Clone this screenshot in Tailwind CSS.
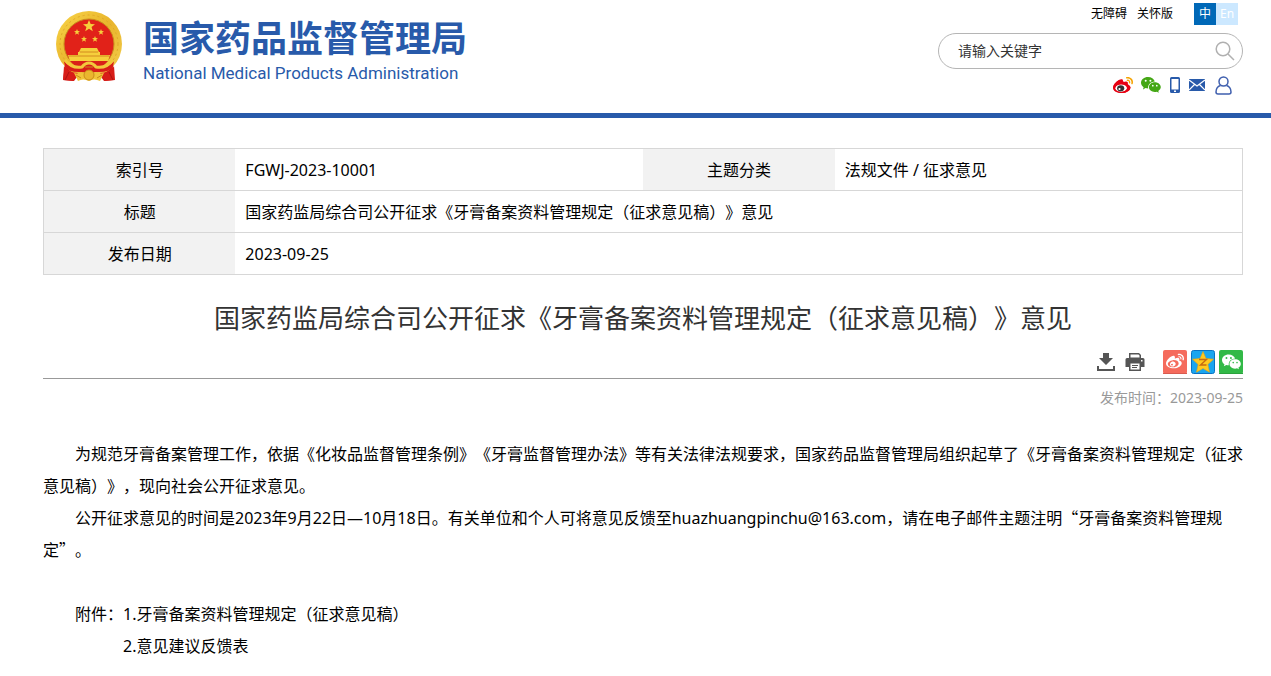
<!DOCTYPE html>
<html lang="zh-CN">
<head>
    <meta charset="UTF-8">
    <meta name="viewport" content="width=device-width, initial-scale=1.0">
    <title>国家药监局综合司公开征求《牙膏备案资料管理规定（征求意见稿）》意见</title>
    <script src="https://cdn.jsdelivr.net/npm/@tailwindcss/browser@4"></script>
</head>
<body class="bg-white text-black font-['Noto_Sans','Noto_Sans_CJK_SC',sans-serif] [text-spacing-trim:space-all] overflow-x-hidden">

    <!-- Shared icon shapes -->
    <svg class="hidden" xmlns="http://www.w3.org/2000/svg">
        <symbol id="weiboBody" viewBox="0 0 24 24">
            <path d="M10.098 20.323c-3.977.391-7.414-1.406-7.672-4.02-.259-2.609 2.759-5.047 6.74-5.441 3.979-.394 7.413 1.404 7.671 4.018.259 2.6-2.759 5.049-6.737 5.439l-.002.004zm7.961-8.674c-.346-.105-.57-.18-.405-.615.375-.977.42-1.804 0-2.404-.781-1.112-2.915-1.053-5.364-.03 0 0-.766.331-.571-.271.376-1.217.315-2.224-.27-2.809-1.338-1.337-4.869.045-7.888 3.08C1.309 10.87 0 13.273 0 15.348c0 3.981 5.099 6.395 10.086 6.395 6.536 0 10.888-3.801 10.888-6.82 0-1.822-1.547-2.854-2.915-3.284v.01z"/>
        </symbol>
        <symbol id="weiboEye" viewBox="0 0 24 24">
            <path fill-rule="evenodd" d="M9.05 17.219c-.384.616-1.208.884-1.829.602-.612-.279-.793-.991-.406-1.593.379-.595 1.176-.861 1.793-.601.622.263.82.972.442 1.592zm1.446-4.346c-1.893-.493-4.033.45-4.857 2.118-.836 1.704-.026 3.591 1.886 4.21 1.983.64 4.318-.341 5.132-2.179.8-1.793-.201-3.642-2.161-4.149z"/>
        </symbol>
        <symbol id="weiboWaves" viewBox="0 0 24 24">
            <path d="M19.967 6.557c-.766-.856-1.908-1.187-2.96-.962-.436.09-.706.511-.616.932.09.42.511.691.932.602.511-.105 1.067.044 1.442.465.376.421.466.977.316 1.473-.136.406.089.856.51.992.405.119.857-.105.992-.512.33-1.021.12-2.178-.646-3.035zm2.418-2.195c-1.576-1.757-3.905-2.419-6.054-1.968-.496.104-.812.587-.706 1.081.104.496.586.813 1.082.707 1.532-.331 3.185.15 4.296 1.383 1.112 1.246 1.429 2.943.947 4.416-.165.48.106 1.007.586 1.157.479.165.991-.104 1.157-.586.675-2.088.241-4.478-1.338-6.235z"/>
        </symbol>
        <symbol id="wechat" viewBox="0 0 20 16">
            <path fill-rule="evenodd" d="M7 0C3.100 0 0 2.600 0 5.800c0 1.800 1 3.400 2.600 4.500L2 12.400l2.500-1.300c.8.3 1.700.4 2.700.4C6.500 7.700 9.600 4.600 13.800 4.400 13.100 1.900 10.300 0 7 0zM4.700 2.800a1 1 0 1 1 0 2 1 1 0 0 1 0-2zm4.700 0a1 1 0 1 1 0 2 1 1 0 0 1 0-2z"/>
            <path fill-rule="evenodd" d="M13.800 5.200c-3.300 0-5.900 2.200-5.900 4.900s2.600 4.900 5.900 4.900c.7 0 1.400-.1 2-.3l2 1-.5-1.800c1.500-.9 2.500-2.300 2.500-3.800 0-2.700-2.700-4.900-6-4.900zm-2 2.600a.8.8 0 1 1 0 1.700.8.8 0 0 1 0-1.700zm4 0a.8.8 0 1 1 0 1.700.8.8 0 0 1 0-1.700z"/>
        </symbol>
        <symbol id="star" viewBox="0 0 24 24">
            <path d="M12 0l3.300 8.200 8.700.3-6.900 5.500 2.500 8.700L12 17.600l-7.600 5.100 2.500-8.700L0 8.500l8.700-.3z"/>
        </symbol>
    </svg>

    <!-- Header -->
    <header class="flex justify-between border-b-5 border-[#285aaa] pl-14 pr-7 pb-[18px]">
        <a href="#" class="flex pt-[11px]">
            <svg class="w-[66px] h-[72px] mr-[21px]" viewBox="0 0 66 72" aria-hidden="true">
                <defs>
                    <linearGradient id="gold" x1="0" y1="0" x2="1" y2="1">
                        <stop offset="0" stop-color="#f8d548"/>
                        <stop offset="0.5" stop-color="#e9b52d"/>
                        <stop offset="1" stop-color="#f3cf4d"/>
                    </linearGradient>
                </defs>
                <path d="M10 46L7 69l11 1 5-7h20l5 7 10-1-2-23z" fill="#cf1a17"/>
                <circle cx="33" cy="33" r="33" fill="url(#gold)"/>
                <circle cx="33" cy="33" r="29" fill="none" stroke="#e0a829" stroke-width="1" stroke-dasharray="2 3"/>
                <circle cx="33" cy="33" r="25" fill="#e12219" stroke="#c98a1c" stroke-width="1"/>
                <g fill="#f6cf3c">
                    <use href="#star" x="27" y="9" width="12" height="12"/>
                    <use href="#star" x="18" y="18" width="6" height="6"/>
                    <use href="#star" x="42" y="18" width="6" height="6"/>
                    <use href="#star" x="25" y="25" width="6" height="6"/>
                    <use href="#star" x="36" y="25" width="6" height="6"/>
                    <path d="M25 37h16l2 4H23zM22 41h22v3H22zM12 44h42l-2 6H14z"/>
                </g>
                <path d="M24 41h18M13 45h40" stroke="#d38a1e" stroke-width="1"/>
                <path d="M14 50h38l-6 6-13-3-13 3z" fill="#d92018"/>
                <path d="M8 50q8 9 17 6 4-4 8-4t8 4q9 3 17-6l-1 6q-3 5-14 5H23q-11 0-14-5z" fill="#d81d18"/>
                <path d="M9 49q7 9 17 7 3-4 7-4t7 4q10 2 17-7" fill="none" stroke="#f3c83c" stroke-width="3"/>
                <path d="M8 55q3 7 14 7l-5 8-10-1zM58 55q-3 7-14 7l5 8 10-1z" fill="#d81d18"/>
                <path d="M13 61l-4 8M53 61l4 8" stroke="#aa1312" stroke-width="1"/>
                <path d="M18 62q9 2 15-3 6 5 15 3l-4 8q-6-3-11 0-6-3-11 0z" fill="#f1c438"/>
                <circle cx="33" cy="64" r="5" fill="#eab62e" stroke="#c98a1c"/>
                <path d="M20 64l5 3M46 64l-5 3M29 56h8" stroke="#c98a1c" stroke-width="1"/>
            </svg>
            <div class="text-[#285aaa] whitespace-nowrap pt-2">
                <p class="text-4xl leading-10 font-bold">国家药品监督管理局</p>
                <p class="text-[17px] leading-7 font-['Roboto',sans-serif]">National Medical Products Administration</p>
            </div>
        </a>

        <div class="w-[305px] flex flex-col">
            <nav class="flex justify-end items-center gap-[10px] pt-[3px] pr-[5px] text-xs">
                <a href="#">无障碍</a>
                <a href="#">关怀版</a>
                <span class="flex ml-[11px] text-white text-center leading-[22px]">
                    <a href="#" class="w-[22px] bg-[#0068b7]">中</a>
                    <a href="#" class="w-[22px] bg-[#cce8ff]">En</a>
                </span>
            </nav>
            <form class="mt-2 h-9 flex items-center rounded-full border border-[#b5b5b5] pl-[19px] pr-[7px]">
                <input type="text" aria-label="请输入关键字" placeholder="请输入关键字" class="flex-1 min-w-0 text-sm outline-none placeholder:text-[#333]">
                <button type="button" aria-label="搜索">
                    <svg class="block size-5" viewBox="0 0 20 20" fill="none" stroke="#b0b0b0" stroke-width="1.500"><circle cx="8" cy="8" r="6.800"/><path d="M13 13l6 6"/></svg>
                </button>
            </form>
            <div class="flex justify-end items-center mt-[6px] pr-[11px] h-5">
                <a href="#" aria-label="微博" class="mr-2">
                    <svg class="block size-5" viewBox="0 0 24 24">
                        <path d="M0 15Q1 9 8 6l3 1 7 4 3 4q-1 6-10 6.500Q1 21 0 15z" fill="#e60012"/>
                        <ellipse cx="9.800" cy="15.800" rx="7" ry="4.500" fill="#fff"/>
                        <use href="#weiboBody" fill="#e60012"/>
                        <ellipse cx="9.200" cy="16" rx="4.300" ry="3.700" fill="#333"/>
                        <circle cx="7.800" cy="16.800" r="1.300" fill="#fff"/>
                        <use href="#weiboWaves" fill="#f5a200"/>
                    </svg>
                </a>
                <a href="#" aria-label="微信" class="mr-[9px]"><svg class="block w-5 h-4 fill-[#45a716]"><use href="#wechat"/></svg></a>
                <a href="#" aria-label="手机" class="mr-[9px]">
                    <svg class="block w-[10px] h-4" viewBox="0 0 10 16"><path fill="#285aaa" fill-rule="evenodd" d="M1.500 0h7A1.500 1.500 0 0 1 10 1.500v13A1.500 1.500 0 0 1 8.500 16h-7A1.500 1.500 0 0 1 0 14.500v-13A1.500 1.500 0 0 1 1.500 0zM1.500 2v10.500h7V2zM4 13.500V15h2v-1.500z"/></svg>
                </a>
                <a href="#" aria-label="邮箱" class="mr-[10px]">
                    <svg class="block w-4 h-3" viewBox="0 0 16 12"><path fill="#285aaa" d="M0 0h16v12H0z"/><path d="M0 1l8 6 8-6M0 11l5.500-5.500M16 11l-5.500-5.500" fill="none" stroke="#fff" stroke-width="1.200"/></svg>
                </a>
                <a href="#" aria-label="个人中心">
                    <svg class="block w-[17px] h-[19px]" viewBox="0 0 17 19" fill="none" stroke="#3f5fae" stroke-width="1.500"><circle cx="8.500" cy="5.500" r="4.500"/><path d="M5.500 9.500C2.500 10.500 1 13 1 16c0 1.300.7 2 2 2h11c1.300 0 2-.7 2-2 0-3-1.500-5.500-4.500-6.500"/></svg>
                </a>
            </div>
        </div>
    </header>

    <main class="pl-[43px] pr-7 pt-[30px]">
        <!-- Document info -->
        <table class="w-full table-fixed border-collapse border border-[#d7d7d7] text-base leading-6">
            <colgroup>
                <col class="w-[16%]">
                <col class="w-[34%]">
                <col class="w-[16%]">
                <col class="w-[34%]">
            </colgroup>
            <tbody>
                <tr class="h-[42px] border-b border-[#d7d7d7]">
                    <th class="bg-[#f2f2f2] font-normal">索引号</th>
                    <td class="px-[10px]">FGWJ-2023-10001</td>
                    <th class="bg-[#f2f2f2] font-normal">主题分类</th>
                    <td class="px-[10px]">法规文件 / 征求意见</td>
                </tr>
                <tr class="h-[42px] border-b border-[#d7d7d7]">
                    <th class="bg-[#f2f2f2] font-normal">标题</th>
                    <td colspan="3" class="px-[10px]">国家药监局综合司公开征求《牙膏备案资料管理规定（征求意见稿）》意见</td>
                </tr>
                <tr class="h-[42px]">
                    <th class="bg-[#f2f2f2] font-normal">发布日期</th>
                    <td colspan="3" class="px-[10px]">2023-09-25</td>
                </tr>
            </tbody>
        </table>

        <!-- Article -->
        <article>
            <h1 class="mt-[23px] text-[26px] leading-10 text-center text-[#333]">国家药监局综合司公开征求《牙膏备案资料管理规定（征求意见稿）》意见</h1>

            <div class="flex justify-end items-center gap-1 mt-3 pb-1 border-b border-[#999]">
                <button type="button" aria-label="下载" class="mr-[5px]">
                    <svg class="block size-5" viewBox="0 0 20 20" fill="#555"><path d="M7 1h6v5h4l-7 7-7-7h4zM1 14h2v3h14v-3h2v5H1z"/></svg>
                </button>
                <button type="button" aria-label="打印" class="mr-[14px]">
                    <svg class="block size-5" viewBox="0 0 20 20"><path fill="#555" fill-rule="evenodd" d="M4 1h10l2 2v3H4zM5.500 2.500v3h9v-2L13.500 2.500zM2 6h16a1.500 1.500 0 0 1 1.500 1.500V15H16v4H4v-4H.5V7.500A1.500 1.500 0 0 1 2 6zm3.500 5.500v6h9v-6zM16 8v1.500h1.500V8zM7 13h6v1H7zm0 2h5v1H7z"/></svg>
                </button>
                <a href="#" aria-label="分享到新浪微博">
                    <svg class="block size-6" viewBox="0 0 24 24">
                        <rect width="24" height="24" rx="2" fill="#f56b5c"/>
                        <rect y="23" width="24" height="1" fill="#d95b50"/>
                        <g fill="#fff">
                            <use href="#weiboBody" x="3" y="2" width="18" height="18"/>
                            <use href="#weiboEye" x="3" y="2" width="18" height="18"/>
                            <use href="#weiboWaves" x="3" y="2" width="18" height="18"/>
                        </g>
                    </svg>
                </a>
                <a href="#" aria-label="分享到QQ空间">
                    <svg class="block size-6" viewBox="0 0 24 24">
                        <rect x="0.500" y="0.500" width="23" height="23" rx="2" fill="#1aa5ef" stroke="#0872c4"/>
                        <path d="M12 1.500l3 7 7.500.7-5.600 5.200 1.600 7.800-6.500-3.800-6.500 3.800 1.600-7.800L1.500 9.200l7.500-.7z" fill="#ffc91f" stroke="#e5a313" stroke-width="0.600"/>
                        <path d="M8 9.500h7.500l-6 5.500H15.500" fill="none" stroke="#c76a10" stroke-width="1.400"/>
                    </svg>
                </a>
                <a href="#" aria-label="分享到微信">
                    <svg class="block size-6" viewBox="0 0 24 24">
                        <rect width="24" height="24" rx="2" fill="#32b947"/>
                        <rect y="23" width="24" height="1" fill="#2ba23d"/>
                        <use href="#wechat" x="3" y="4" width="19" height="16" fill="#fff"/>
                    </svg>
                </a>
            </div>
            <p class="mt-[7px] text-right text-sm leading-6 text-[#999]">发布时间：2023-09-25</p>

            <div class="mt-7 text-base leading-8">
                <p class="indent-8">为规范牙膏备案管理工作，依据《化妆品监督管理条例》《牙膏监督管理办法》等有关法律法规要求，国家药品监督管理局组织起草了《牙膏备案资料管理规定（征求意见稿）》，现向社会公开征求意见。</p>
                <p class="indent-8">公开征求意见的时间是2023年9月22日—10月18日。有关单位和个人可将意见反馈至huazhuangpinchu@163.com，请在电子邮件主题注明<span class="leading-none font-['Noto_Sans_CJK_SC',sans-serif]">“</span>牙膏备案资料管理规定<span class="leading-none font-['Noto_Sans_CJK_SC',sans-serif]">”</span>。</p>
                <p class="mt-8 pl-8">附件：<a href="#">1.牙膏备案资料管理规定（征求意见稿）</a></p>
                <p class="pl-20"><a href="#">2.意见建议反馈表</a></p>
            </div>
        </article>
    </main>

</body>
</html>
